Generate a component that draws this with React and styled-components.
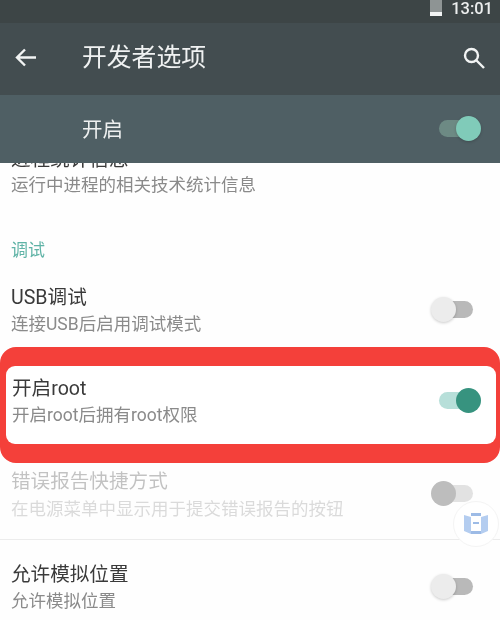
import React from "react";
import styled, { createGlobalStyle } from "styled-components";

const Global = createGlobalStyle`
  html, body { margin: 0; padding: 0; background: #fff; }
  body { font-family: "Roboto", "Noto Sans CJK SC", sans-serif; }
`;

const Screen = styled.div`
  position: relative;
  width: 500px;
  height: 620px;
  overflow: hidden;
  display: flex;
  flex-direction: column;
  background: #fefefe;
  filter: blur(0.45px);
`;

const Header = styled.header`
  flex: none;
  position: relative;
  z-index: 1;
  display: flex;
  flex-direction: column;
`;

const StatusBar = styled.div`
  height: 23px;
  background: #3d4546;
  display: flex;
  align-items: flex-start;
  justify-content: flex-end;
  gap: 9px;
  padding-right: 7px;
  color: #eceeee;
  font: 500 16.5px/17px "Roboto", sans-serif;
`;

const Battery = styled.span`
  width: 12px;
  height: 16px;
  background: linear-gradient(#8e9494 0 72%, #f2f4f4 72%);
`;

const Toolbar = styled.div`
  height: 72px;
  box-sizing: border-box;
  background: #434d50;
  display: flex;
  align-items: center;
  padding: 0 14px 3px 15px;
  color: #f0f2f2;
`;

const BarIcon = styled.svg`
  flex: none;
  display: block;
`;

const ScreenTitle = styled.h1`
  margin: 0 0 0 46px;
  flex: 1;
  font-size: 24.8px;
  line-height: 32px;
  font-weight: 400;
`;

const MasterBar = styled.div`
  height: 68px;
  box-sizing: border-box;
  background: #4f5f64;
  display: flex;
  align-items: center;
  justify-content: space-between;
  padding: 0 27px 2px 82px;
  color: #eef0f0;
  font-size: 20.5px;
`;

const List = styled.main`
  flex: 1;
  min-height: 0;
  display: flex;
  flex-direction: column;
`;

const ClippedTop = styled.div`
  height: 56px;
  margin-top: -20px;
  padding-left: 11px;
`;

const SectionLabel = styled.div`
  height: 26px;
  margin-top: 37px;
  padding-left: 11px;
  color: #5fb3a6;
  font-size: 17px;
  line-height: 28px;
`;

const Row = styled.div`
  flex: none;
  height: ${(p) => p.$height}px;
  margin-top: ${(p) => p.$top || 0}px;
  padding: ${(p) => p.$pt || 0}px 27px ${(p) => p.$pb || 0}px 11px;
  display: flex;
  align-items: center;
  justify-content: space-between;
  box-sizing: border-box;
  border-bottom: ${(p) => (p.$divider ? "1px solid #ececec" : "none")};
`;

const Texts = styled.div`
  display: flex;
  flex-direction: column;
  padding-top: 4px;
  gap: ${(p) => p.$gap ?? 1}px;
  opacity: ${(p) => (p.$dim ? 0.3 : 1)};
`;

const Title = styled.div`
  font-size: 19.6px;
  line-height: 26px;
  color: #3a3a3a;
`;

const Summary = styled.div`
  font-size: 17.5px;
  line-height: 25px;
  color: #8a8a8a;
`;

const Highlight = styled.div`
  flex: none;
  height: 116px;
  margin-top: 7px;
  box-sizing: border-box;
  border-style: solid;
  border-color: #f4403a;
  border-width: 19px 4px 19px 6px;
  border-radius: 16px;
  background: #f4403a;
`;

const HighlightInner = styled.div`
  height: 100%;
  background: #fff;
  border-radius: 9px;
  box-sizing: border-box;
  padding: 0 23px 10px 6px;
  display: flex;
  align-items: center;
  justify-content: space-between;
`;

const SwitchTrack = styled.span`
  position: relative;
  display: block;
  flex: none;
  width: 34px;
  height: 17px;
  border-radius: 9px;
  background: ${(p) => p.$track};
`;

const SwitchThumb = styled.span`
  position: absolute;
  top: -4px;
  left: ${(p) => (p.$on ? 17 : -8)}px;
  width: 25px;
  height: 25px;
  border-radius: 50%;
  background: ${(p) => p.$thumb};
  box-shadow: ${(p) => (p.$flat ? "none" : "0 1px 3px rgba(0,0,0,.2)")};
`;

const Toggle = ({ on, track, thumb, flat }) => (
  <SwitchTrack $track={track}>
    <SwitchThumb $on={on} $thumb={thumb} $flat={flat} />
  </SwitchTrack>
);

const FloatBadge = styled.div`
  position: absolute;
  left: 453px;
  top: 501px;
  width: 44px;
  height: 44px;
  border-radius: 50%;
  background: #fff;
  border: 1px solid #f4f4f4;
  display: flex;
  align-items: center;
  justify-content: center;
`;

export default function App() {
  return (
    <>
      <Global />
      <Screen>
        <Header>
          <StatusBar>
            <Battery />
            <span>13:01</span>
          </StatusBar>
          <Toolbar>
            <BarIcon width="21" height="21" viewBox="0 0 21 21" fill="none" stroke="#f2f4f4" strokeWidth="2.4">
              <path d="M21 10.5H2M10 2.5l-8 8 8 8" />
            </BarIcon>
            <ScreenTitle>开发者选项</ScreenTitle>
            <BarIcon width="24" height="24" viewBox="0 0 24 24" fill="none" stroke="#f2f4f4" strokeWidth="2.4">
              <circle cx="9.5" cy="9.5" r="6.5" />
              <path d="M14.5 14.5L22 22" />
            </BarIcon>
          </Toolbar>
          <MasterBar>
            <span>开启</span>
            <Toggle on track="#6d8a84" thumb="#80cbb9" />
          </MasterBar>
        </Header>
        <List>
          <ClippedTop>
            <Texts $gap={0}>
              <Title>进程统计信息</Title>
              <Summary>运行中进程的相关技术统计信息</Summary>
            </Texts>
          </ClippedTop>
          <SectionLabel>调试</SectionLabel>
          <Row $height={62} $top={16}>
            <Texts>
              <Title>USB调试</Title>
              <Summary>连接USB后启用调试模式</Summary>
            </Texts>
            <Toggle track="#b9b9b9" thumb="#ececec" />
          </Row>
          <Highlight>
            <HighlightInner>
              <Texts>
                <Title>开启root</Title>
                <Summary>开启root后拥有root权限</Summary>
              </Texts>
              <Toggle on track="#b7dfd9" thumb="#37937f" flat />
            </HighlightInner>
          </Highlight>
          <Row $height={77} $pb={16} $divider>
            <Texts $dim $gap={2}>
              <Title>错误报告快捷方式</Title>
              <Summary>在电源菜单中显示用于提交错误报告的按钮</Summary>
            </Texts>
            <Toggle track="#e2e2e2" thumb="#bdbdbd" flat />
          </Row>
          <Row $height={80} $pt={12}>
            <Texts>
              <Title>允许模拟位置</Title>
              <Summary>允许模拟位置</Summary>
            </Texts>
            <Toggle track="#b9b9b9" thumb="#ececec" />
          </Row>
        </List>
        <FloatBadge>
          <svg width="26" height="26" viewBox="0 0 26 26">
            <path d="M1 4l7 2v17l-7-3zM25 4l-7 2v17l7-3z" fill="#b4cdf0" />
            <path d="M8 2h10v3H8zM10 11h6v2h-6zM8 20h10v3H8z" fill="#9dbbe6" />
          </svg>
        </FloatBadge>
      </Screen>
    </>
  );
}
